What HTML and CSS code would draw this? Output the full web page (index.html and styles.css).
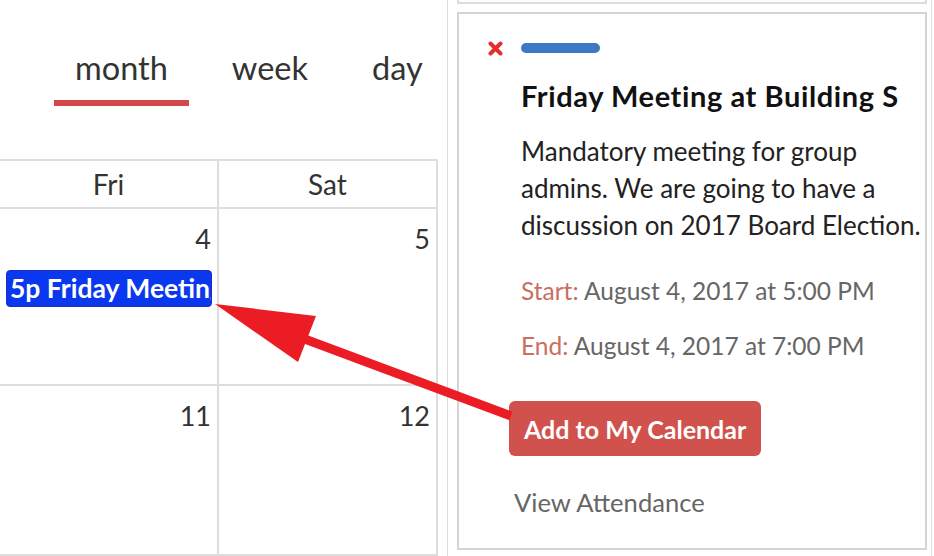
FILE: index.html
```html
<!DOCTYPE html>
<html>
<head>
<meta charset="utf-8">
<link rel="stylesheet" href="styles.css">
</head>
<body>
<div class="page">
  <div class="left">
    <div class="tabs">
      <div class="tab active">month</div>
      <div class="tab">week</div>
      <div class="tab">day</div>
    </div>
    <div class="cal">
      <div class="head">Fri</div>
      <div class="head">Sat</div>
      <div class="cell">
        <div class="num">4</div>
        <div class="event">5p Friday Meeting at Building S</div>
      </div>
      <div class="cell"><div class="num">5</div></div>
      <div class="cell"><div class="num">11</div></div>
      <div class="cell"><div class="num">12</div></div>
    </div>
  </div>
  <div class="panel">
    <div class="prev-box"></div>
    <div class="card">
      <div class="card-top">
        <svg class="close" width="15" height="15" viewBox="0 0 15 15">
          <path d="M2.5 2.5 L12.5 12.5 M12.5 2.5 L2.5 12.5" stroke="#e0312f" stroke-width="4" stroke-linecap="round"/>
        </svg>
        <span class="color-bar"></span>
      </div>
      <div class="content">
        <h2 class="title">Friday Meeting at Building S</h2>
        <p class="desc">Mandatory meeting for group admins. We are going to have a discussion on 2017 Board Election.</p>
        <p class="when"><span class="label">Start:</span> August 4, 2017 at 5:00 PM</p>
        <p class="when end"><span class="label">End:</span> August 4, 2017 at 7:00 PM</p>
      </div>
      <button class="add">Add to My Calendar</button>
      <div class="attend">View Attendance</div>
    </div>
  </div>
</div>
<svg class="arrow" width="934" height="556" viewBox="0 0 934 556">
  <line x1="302" y1="338" x2="511" y2="416" stroke="#ec1c24" stroke-width="9"/>
  <polygon points="215,304 316,316 298,362" fill="#ec1c24"/>
</svg>
</body>
</html>
```
FILE: styles.css
```css
* { box-sizing: border-box; }
html, body { margin: 0; padding: 0; background: #fff; }
body {
  font-family: Lato, "Liberation Sans", sans-serif;
  width: 934px;
  height: 556px;
  overflow: hidden;
  position: relative;
}
.page {
  display: flex;
  height: 556px;
  overflow: hidden;
}
.left {
  width: 447px;
  flex: none;
}
.tabs {
  display: flex;
  gap: 22px;
  padding: 47px 0 0 54px;
  height: 159px;
}
.tab {
  font-size: 32.5px;
  color: #333;
  padding: 0 21px;
  height: 59px;
  line-height: 42px;
}
.tab.active {
  border-bottom: 6px solid #d2484a;
}
.cal {
  width: 438px;
  height: 397px;
  display: grid;
  grid-template-columns: 219px 219px;
  grid-template-rows: 48px 177px 1fr;
  border-top: 2px solid #ddd;
}
.head {
  border-right: 2px solid #ddd;
  border-bottom: 2px solid #ddd;
  text-align: center;
  font-size: 28px;
  color: #333;
  line-height: 46px;
}
.cell {
  border-right: 2px solid #ddd;
  border-bottom: 2px solid #ddd;
  padding: 13px 5px 0 6px;
}
.num {
  text-align: right;
  font-size: 27px;
  color: #333;
  line-height: 34px;
  padding-right: 1px;
}
.event {
  margin-top: 14px;
  background: #0a38ee;
  border: 1px solid #1a2fc0;
  border-radius: 4px;
  color: #fff;
  font-weight: 700;
  font-size: 26.5px;
  height: 37px;
  line-height: 35px;
  padding-left: 3px;
  white-space: nowrap;
  overflow: hidden;
}
.panel {
  flex: none;
  width: 485px;
  border-left: 1px solid #ddd;
  border-right: 1px solid #ddd;
  padding: 0 4px 0 9px;
}
.prev-box {
  height: 4px;
  border: 2px solid #ddd;
  border-top: none;
  margin-bottom: 8px;
}
.card {
  border: 2px solid #d4d4d4;
  height: 538px;
  padding: 26px 0 0 50px;
}
.card-top {
  display: flex;
  align-items: center;
  gap: 18px;
  height: 16px;
}
.close {
  margin-left: -21px;
  flex: none;
}
.color-bar {
  width: 79px;
  height: 10px;
  background: #3b78c6;
  border-radius: 5px;
}
.content {
  padding-left: 12px;
}
.title {
  margin: 20px 0 0;
  font-size: 29px;
  letter-spacing: 0.6px;
  font-weight: 700;
  color: #111;
  line-height: 40px;
}
.desc {
  margin: 17px 0 0;
  font-size: 26px;
  color: #222;
  line-height: 37px;
  width: 405px;
}
.when {
  margin: 31px 0 0;
  font-size: 24.5px;
  color: #666;
  line-height: 32px;
}
.when.end { margin-top: 23px; }
.label { color: #c96f60; }
.add {
  display: block;
  margin-top: 39px;
  font-family: inherit;
  font-size: 25px;
  font-weight: 700;
  color: #fff;
  background: #d1524d;
  border: none;
  border-radius: 6px;
  width: 252px;
  height: 55px;
  padding: 0 0 0 15px;
  text-align: left;
}
.attend {
  margin: 30px 0 0 5px;
  font-size: 25.6px;
  color: #666;
  line-height: 32px;
}
.arrow {
  position: absolute;
  left: 0;
  top: 0;
  pointer-events: none;
}
```
